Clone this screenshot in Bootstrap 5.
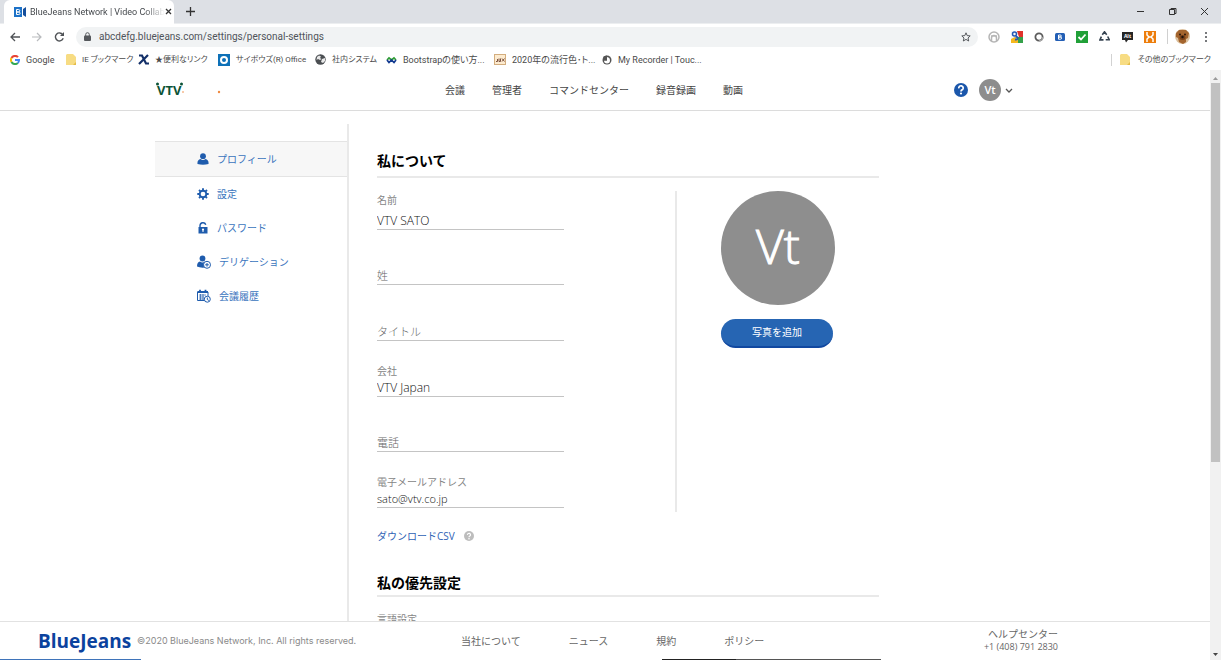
<!DOCTYPE html>
<html lang="ja">
<head>
<meta charset="utf-8">
<meta name="viewport" content="width=device-width, initial-scale=1">
<title>BlueJeans Network | Video Collaboration</title>
<link rel="stylesheet" href="https://cdn.jsdelivr.net/npm/bootstrap@5.3.0/dist/css/bootstrap.min.css">
<style>
  :root { --bj-blue: #1f5cad; --rule: #e4e4e4; --soft-rule: #e9e9e9; }
  body { font-family: "Open Sans", "Noto Sans CJK JP", sans-serif; font-size: 10px; line-height: 16px; color: #444; background: #fff; }
  a { text-decoration: none; color: inherit; }
  svg { display: block; flex: none; }
  button { border: 0; background: none; padding: 0; color: inherit; }

  /* browser frame */
  .tabstrip { height: 24px; background: #dde0e5; border-bottom: 1px solid #eceef0; }
  .page-tab { width: 170px; height: 24px; margin-left: 4px; padding: 0 8px 0 10px; background: #fff; border-radius: 6px 6px 0 0; font: 9px/24px "Roboto", sans-serif; color: #45494d; }
  .tab-title { white-space: nowrap; -webkit-mask-image: linear-gradient(90deg, #000 85%, transparent); mask-image: linear-gradient(90deg, #000 85%, transparent); }
  .window-buttons { gap: 23px; padding-right: 12px; }
  .toolbar { height: 25px; padding: 0 10px; }
  .nav-arrows { width: 66px; gap: 12px; }
  .omnibox { height: 20px; border-radius: 10px; background: #f1f3f4; padding: 0 7px 0 8px; }
  .omnibox input { border: 0; outline: 0; background: none; padding: 0; font: 10px/16px "Roboto", sans-serif; color: #50545a; }
  .extensions { gap: 11px; padding-left: 10px; }
  .extensions .vr { margin-right: -4px; }
  .bookmarks { height: 21px; padding: 0 10px; font: 9px/20px "Roboto", "Noto Sans CJK JP", sans-serif; font-feature-settings: "palt"; color: #4a4a4a; }
  .bookmark-list { display: grid; grid-template-columns: 56px 72px 80px 97px 71px 108px 108px auto; white-space: nowrap; }
  .bookmark-list a { display: flex; align-items: center; gap: 6px; }
  .kana { font-size: 8px; }

  /* site */
  .site-header { height: 41px; border-bottom: 1px solid #dcdcdc; }
  .wrap { width: 100%; max-width: 900px; margin: 0 auto; }
  .brand { width: 290px; }
  .main-menu { gap: 27px; }
  .initials { width: 22px; height: 22px; border-radius: 50%; background: #8d8d8d; color: #fff; font: 600 11px/22px "Open Sans", sans-serif; text-align: center; }
  .account { gap: 11px; margin-right: 42px; }
  .side { width: 194px; margin-top: 13px; padding-top: 17px; border-right: 2px solid var(--soft-rule); }
  .side a { display: flex; align-items: center; height: 34px; padding-left: 42px; gap: 8px; color: #3a74bd; }
  .side a.current { height: 36px; background: #f7f7f7; border-top: 1px solid var(--rule); border-bottom: 1px solid var(--rule); }
  .settings { width: 530px; padding: 38px 0 0 28px; }
  .section-title { font-size: 14px; line-height: 24px; font-weight: 700; color: #000; margin: 0; border-bottom: 2px solid var(--soft-rule); }
  .section-title.roomy { padding-bottom: 3px; }
  .fields { display: grid; grid-auto-rows: 1fr; width: 187px; height: 334px; margin-top: -4px; }
  .field { display: flex; flex-direction: column; justify-content: flex-end; }
  .field label, .muted { color: #858585; line-height: 16px; }
  .field input { border: 0; border-bottom: 1px solid #c4c4c4; border-radius: 0; outline: 0; padding: 0; width: 100%; height: 18px; font: 300 11px/16px "Open Sans", "Noto Sans CJK JP", sans-serif; color: #111; }
  .field input.large-value { font-size: 12px; }
  .field input::placeholder { color: #666; opacity: 1; }
  .photo { margin: 13px 0 0 111px; padding-left: 44px; height: 321px; border-left: 2px solid var(--soft-rule); }
  .big-initials { width: 114px; height: 114px; border-radius: 50%; background: #8e8e8e; color: #fff; font: 300 48px/110px "Open Sans", sans-serif; -webkit-text-stroke: 1px #fff; text-align: center; }
  .add-photo { width: 112px; height: 29px; margin-top: 14px; border-radius: 15px; background: #2665b3; border-bottom: 2px solid #1148a0; color: #fff; line-height: 27px; }
  .csv { margin: 16px 0 27px; gap: 9px; height: 16px; color: #2f62b5; }
  .muted { padding-top: 14px; }
  .site-footer { height: 38px; border-top: 1px solid #e2e2e2; padding: 0 152px 0 38px; color: #666; background: #fff; }
  .logo-text { font: 700 19px/34px "Open Sans", sans-serif; color: #0b429e; width: 99px; }
  .copyright { width: 324px; color: #8a8a8a; font: 9px/36px "Inter", sans-serif; }
  .foot-links { gap: 48px; }
  .help { line-height: 12px; text-align: right; }
  .help small { font-size: 9px; }
  .taskbar-edge { height: 1px; background: linear-gradient(90deg, #3f74ba 0 141px, transparent 141px 662px, #222 662px 736px, #555 736px 881px, transparent 881px); }
  .scroller { width: 11px; background: #f1f1f1; }
  .scroller .thumb { flex: 67; margin: 0 1px; background: #c1c1c1; }
  .scroller .rest { flex: 33; }
</style>
</head>
<body class="vh-100 overflow-hidden d-flex flex-column">

<div class="tabstrip d-flex align-items-center flex-shrink-0">
  <div class="page-tab d-flex align-items-center">
    <svg width="12" height="10" viewBox="0 0 12 10"><rect width="8" height="10" fill="#1d72c8"/><path d="M9 2l3-2v10l-3-2z" fill="#164f9c"/><path d="M2.500 2.500h2a1.200 1.200 0 010 2.500h-2zM2.500 5h2.300a1.200 1.200 0 010 2.500H2.500z" fill="none" stroke="#fff"/></svg>
    <span class="tab-title flex-fill ms-1">BlueJeans Network | Video Collab</span>
    <button aria-label="タブを閉じる"><svg width="7" height="7" viewBox="0 0 7 7" stroke="#333" stroke-width="1.300"><path d="M1 1l5 5M6 1L1 6"/></svg></button>
  </div>
  <button class="ms-2 ps-1" aria-label="新しいタブ"><svg width="9" height="9" viewBox="0 0 9 9" stroke="#333" stroke-width="1.300"><path d="M4.500 0v9M0 4.500h9"/></svg></button>
  <div class="window-buttons d-flex align-items-center ms-auto">
    <button aria-label="最小化"><svg width="9" height="9" viewBox="0 0 9 9" stroke="#333"><path d="M1 4.500h7"/></svg></button>
    <button aria-label="元に戻す"><svg width="9" height="9" viewBox="0 0 9 9" stroke="#333" fill="none"><path d="M1.500 2.500h5v5h-5zM3 2.500v-1h5v5H6.500"/></svg></button>
    <button aria-label="閉じる"><svg width="9" height="9" viewBox="0 0 9 9" stroke="#333"><path d="M1 1l7 7M8 1L1 8"/></svg></button>
  </div>
</div>

<div class="toolbar d-flex align-items-center flex-shrink-0">
  <div class="nav-arrows d-flex align-items-center">
    <button aria-label="戻る"><svg width="10" height="10" viewBox="0 0 10 10" fill="none" stroke="#505357" stroke-width="1.300"><path d="M10 5H1M5 1L1 5l4 4"/></svg></button>
    <button aria-label="進む"><svg width="10" height="10" viewBox="0 0 10 10" fill="none" stroke="#b9bbbe" stroke-width="1.200"><path d="M0 5h9M5 1l4 4-4 4"/></svg></button>
    <button aria-label="再読み込み"><svg width="11" height="10" viewBox="0 0 11 10" fill="none" stroke="#505357" stroke-width="1.400"><path d="M8.700 2.600A4 4 0 109.200 6.300"/><path d="M10 0v4H6z" fill="#505357" stroke="none"/></svg></button>
  </div>
  <div class="omnibox d-flex align-items-center flex-fill">
    <svg width="7" height="9" viewBox="0 0 7 9"><rect y="3.500" width="7" height="5.500" rx="1" fill="#55585c"/><path d="M1.700 4V2.500a1.800 1.800 0 013.600 0V4" fill="none" stroke="#55585c"/></svg>
    <input class="flex-fill ms-2" type="text" aria-label="アドレス" value="abcdefg.bluejeans.com/settings/personal-settings">
    <svg width="10" height="10" viewBox="0 0 10 10" fill="none" stroke="#55585c"><path d="M5 .8l1.200 2.800 3 .3L7 6l.7 3L5 7.400 2.300 9 3 6 .8 3.900l3-.3z"/></svg>
  </div>
  <div class="extensions d-flex align-items-center">
    <svg width="12" height="12" viewBox="0 0 12 12" fill="none" stroke="#b5b5b5" stroke-width="1.500"><circle cx="6" cy="6" r="5"/><path d="M3.500 10V7a2.500 2.500 0 015 0v3M3 5h6"/></svg>
    <svg width="12" height="12" viewBox="0 0 12 12"><path d="M0 0h12v12H0z" fill="#f4f6fa"/><path d="M6 0h6v6H8z" fill="#e0322b"/><path d="M7 6h5v6H7z" fill="#35a14a"/><path d="M0 8l4-2 3 2v4H0z" fill="#f5b81e"/><circle cx="3.500" cy="3" r="2" fill="none" stroke="#2358b5" stroke-width="1.500"/><path d="M4.500 5.500C8 6 7 9 4 8.500" fill="none" stroke="#2358b5" stroke-width="1.800"/></svg>
    <svg width="10" height="10" viewBox="0 0 10 10"><circle cx="5" cy="5" r="3.600" fill="none" stroke="#5c5c5c" stroke-width="1.800"/><path d="M5 9a4 4 0 004-4" fill="none" stroke="#aaa" stroke-width="1.500"/></svg>
    <svg width="10" height="10" viewBox="0 0 10 10"><rect y="1" width="10" height="8" rx="1.500" fill="#235fb5"/><path d="M3.500 3h1.800a1 1 0 010 2H3.500zM3.500 5h2a1 1 0 010 2.200h-2z" fill="none" stroke="#fff"/></svg>
    <svg width="12" height="12" viewBox="0 0 12 12"><rect width="12" height="12" fill="#21a038"/><path d="M2.500 6l2.500 2.500 4.500-5" fill="none" stroke="#fff" stroke-width="1.800"/></svg>
    <svg width="11" height="11" viewBox="0 0 11 11" fill="none" stroke="#344250" stroke-width="1.600"><path d="M3.300 3.800L5.500.8l2.200 3M8.700 5.500l1.500 3.200H6.700M4.500 8.900H.9l1.500-3.300"/></svg>
    <svg width="12" height="12" viewBox="0 0 12 12"><path d="M1 1h11v8H7l-2 2.500L4 9H1z" fill="#252525"/><text x="6.500" y="7" text-anchor="middle" font-family="Open Sans" font-weight="700" font-size="5" fill="#fff">Alt</text></svg>
    <svg width="12" height="12" viewBox="0 0 12 12"><rect width="12" height="12" fill="#ed7d0b"/><path d="M3 1v3l2 2-2 2v3M9 1v3L7 6l2 2v3M5 6h2" fill="none" stroke="#fff" stroke-width="1.500"/></svg>
    <span class="vr"></span>
    <svg width="15" height="15" viewBox="0 0 15 15"><circle cx="7.500" cy="7.500" r="7.500" fill="#dcc09d"/><path d="M1 4l3-3h7l3 3-1 5-2 1v3l-3 2-4-2-1-4-2-1z" fill="#a3642e"/><ellipse cx="7.500" cy="8.500" rx="3" ry="2.500" fill="#784018"/><circle cx="5" cy="5.500" r="1" fill="#2c170b"/><circle cx="10" cy="5.500" r="1" fill="#2c170b"/><circle cx="7.500" cy="8" r="1.200" fill="#1e120b"/></svg>
    <button aria-label="メニュー"><svg width="10" height="12" viewBox="0 0 10 12" fill="#4a4d50"><circle cx="5" cy="2" r="1"/><circle cx="5" cy="6" r="1"/><circle cx="5" cy="10" r="1"/></svg></button>
  </div>
</div>

<div class="bookmarks d-flex align-items-center flex-shrink-0">
  <nav class="bookmark-list" aria-label="ブックマーク">
    <a href="#"><svg width="10" height="10" viewBox="0 0 10 10" fill="none" stroke-width="2"><path d="M8 2.200A4 4 0 001.500 3" stroke="#e84335"/><path d="M1.500 3a4 4 0 000 4" stroke="#f9bc05"/><path d="M1.500 7A4 4 0 007.800 8" stroke="#34a853"/><path d="M7.800 8A4 4 0 009 5H5" stroke="#4285f4"/></svg><span>Google</span></a>
    <a href="#"><svg width="10" height="11" viewBox="0 0 10 11"><path d="M1 0h6l3 3v8H0V1z" fill="#f7dc83"/><path d="M7 11l3-3v3z" fill="#e5bc48"/></svg><span class="kana">IE ブックマーク</span></a>
    <a href="#"><svg width="11" height="11" viewBox="0 0 11 11" stroke="#132f68" stroke-width="2.200"><path d="M1 1.500h3l4 8h3M10 1L1 10" fill="none"/></svg><span class="kana">★便利なリンク</span></a>
    <a href="#"><svg width="12" height="12" viewBox="0 0 12 12"><rect width="12" height="12" fill="#0e71b8"/><circle cx="6" cy="6" r="3" fill="none" stroke="#fff" stroke-width="2"/></svg><span class="kana">サイボウズ(R) Office</span></a>
    <a href="#"><svg width="11" height="11" viewBox="0 0 11 11"><circle cx="5.500" cy="5.500" r="5.200" fill="#4b4e52"/><path d="M2 3l2-1.500 2 1L5 4l1.500 1L5 6 3 5 1.500 6zM7 5l3-1v3L8 9 6 8z" fill="#e8e8e8"/></svg><span class="kana">社内システム</span></a>
    <a href="#"><svg width="11" height="8" viewBox="0 0 11 8" fill="none" stroke-width="1.700"><path d="M1 4l2-2 2.500 2L8 2l2 2" stroke="#2f9d35"/><path d="M1 4l2 2.500L5.500 4 8 6.500 10 4" stroke="#123a90"/></svg><span>Bootstrapの使い方...</span></a>
    <a href="#"><svg width="12" height="11" viewBox="0 0 12 11"><rect x=".5" y=".5" width="11" height="10" fill="#fdebcf" stroke="#d3ad7e"/><path d="M2 7.500h1.500V5M5 4.500v3h1.500v-3M8 4.500l2.500 3M10.500 4.500L8 7.500" fill="none" stroke="#7c5240"/></svg><span>2020年の流行色･ト...</span></a>
    <a href="#"><svg width="10" height="10" viewBox="0 0 10 10"><circle cx="5" cy="5" r="4.500" fill="#555"/><path d="M5 2v3.500H2A3 3 0 108 5.500 3.500 3.500 0 005 2z" fill="#fff"/><path d="M1.500 1.500L5 .5v5H1z" fill="#555"/></svg><span>My Recorder | Touc...</span></a>
  </nav>
  <a class="d-flex align-items-center ms-auto gap-2" href="#"><span class="vr my-1"></span><svg width="10" height="11" viewBox="0 0 10 11"><path d="M1 0h6l3 3v8H0V1z" fill="#f7dc83"/><path d="M7 11l3-3v3z" fill="#e5bc48"/></svg><span class="kana text-nowrap">その他のブックマーク</span></a>
</div>

<div class="d-flex flex-fill overflow-hidden">
  <div class="d-flex flex-column flex-fill overflow-hidden">
    <header class="site-header d-flex align-items-center flex-shrink-0">
      <div class="wrap d-flex align-items-center">
        <a class="brand" href="#" aria-label="VTV">
          <svg width="68" height="20" viewBox="0 0 68 20"><text x="2" y="15" font-family="Open Sans" font-weight="700" font-size="13" fill="#0c5336">VTV</text><circle cx="2.500" cy="4" r="1.500" fill="#0c5336"/><circle cx="26.500" cy="4" r="1.500" fill="#0c5336"/><circle cx="28" cy="12" r="1" fill="#f5b98e"/><circle cx="64" cy="12" r="1.200" fill="#ef8b42"/></svg>
        </a>
        <nav class="main-menu d-flex text-nowrap"><a href="#">会議</a><a href="#">管理者</a><a href="#">コマンドセンター</a><a href="#">録音録画</a><a href="#">動画</a></nav>
        <div class="account d-flex align-items-center ms-auto">
          <button aria-label="ヘルプ"><svg width="14" height="14" viewBox="0 0 14 14"><circle cx="7" cy="7" r="7" fill="#1b57ab"/><path d="M4.800 5.300a2.200 2.200 0 114 .9C8.200 7 7 7 7 8.500" fill="none" stroke="#fff" stroke-width="1.700"/><circle cx="7" cy="10.500" r="1.100" fill="#fff"/></svg></button>
          <button class="d-flex align-items-center" aria-label="アカウント"><span class="initials me-1">Vt</span><svg width="8" height="5" viewBox="0 0 8 5" fill="none" stroke="#555" stroke-width="1.300"><path d="M1 1l3 3 3-3"/></svg></button>
        </div>
      </div>
    </header>

    <main class="flex-fill overflow-hidden">
      <div class="wrap d-flex h-100">
        <nav class="side flex-shrink-0" aria-label="設定メニュー">
          <a class="current" href="#"><svg width="12" height="12" viewBox="0 0 12 12" fill="#1f5cad"><circle cx="6" cy="3.200" r="2.900"/><path d="M3.500 6Q6 8 8.500 6 12 7 11.500 11 6 12.500 .5 11 0 7 3.500 6z"/></svg>プロフィール</a>
          <a href="#"><svg width="12" height="12" viewBox="0 0 12 12" fill="none" stroke="#1f5cad"><circle cx="6" cy="6" r="3.300" stroke-width="1.900"/><path d="M6 .3v2M6 9.700v2M.3 6h2M9.700 6h2M2 2l1.400 1.400M8.600 8.600L10 10M10 2L8.600 3.400M3.400 8.600L2 10" stroke-width="1.900"/></svg>設定</a>
          <a href="#"><svg width="12" height="12" viewBox="0 0 12 12"><path d="M3 6V3.500a3 3 0 015.800-.8" fill="none" stroke="#1f5cad" stroke-width="1.400"/><path d="M1.500 5h9v6.500h-9z" fill="#1f5cad"/><circle cx="6" cy="7.500" r="1.100" fill="#fff"/><path d="M5.500 8h1v2h-1z" fill="#fff"/></svg>パスワード</a>
          <a href="#"><svg width="14" height="14" viewBox="0 0 14 14"><g fill="#1f5cad"><circle cx="5.500" cy="3.500" r="2.900"/><path d="M3 6.500q2.500 2 5 0l2 1.500-2 4.500Q3 13 0 11.500 0 7 3 6.500z"/></g><circle cx="10" cy="9.800" r="3.500" fill="#fff" stroke="#1f5cad"/><path d="M10 8v3.600M8.200 9.800h3.600" stroke="#1f5cad"/></svg>デリゲーション</a>
          <a href="#"><svg width="14" height="14" viewBox="0 0 14 14" fill="none" stroke="#1f5cad"><path d="M.5 3v8.500h8M.5 3h10.500v4"/><path d="M.5 3h10.500M3 .8v2.500M8.500 .8v2.500" stroke-width="1.800"/><path d="M2 6h7M2 8h5M2 10h5M3.500 5v6M6 5v6" stroke-width=".7"/><circle cx="10.300" cy="10.200" r="3" fill="#fff"/><path d="M10.300 8.500v2l1.500 1"/></svg>会議履歴</a>
        </nav>

        <div class="settings flex-shrink-0">
          <h2 class="section-title roomy">私について</h2>
          <div class="d-flex">
            <form class="fields">
              <div class="field"><label class="mb-1" for="f-name">名前</label><input class="large-value" id="f-name" type="text" value="VTV SATO"></div>
              <div class="field"><input id="f-last" type="text" placeholder="姓" aria-label="姓"></div>
              <div class="field"><input id="f-title" type="text" placeholder="タイトル" aria-label="タイトル"></div>
              <div class="field"><label for="f-company">会社</label><input class="large-value" id="f-company" type="text" value="VTV Japan"></div>
              <div class="field"><input id="f-tel" type="tel" placeholder="電話" aria-label="電話"></div>
              <div class="field"><label for="f-mail">電子メールアドレス</label><input id="f-mail" type="email" value="sato@vtv.co.jp"></div>
            </form>
            <div class="photo">
              <div class="big-initials">Vt</div>
              <button class="add-photo" type="button">写真を追加</button>
            </div>
          </div>
          <div class="csv d-flex align-items-center"><a href="#">ダウンロードCSV</a><svg width="10" height="10" viewBox="0 0 10 10"><circle cx="5" cy="5" r="5" fill="#bdbdbd"/><path d="M3.500 3.900a1.500 1.500 0 112.700.8C5.700 5.200 5 5.200 5 6.200" fill="none" stroke="#fff" stroke-width="1.200"/><circle cx="5" cy="7.700" r=".8" fill="#fff"/></svg></div>
          <h2 class="section-title">私の優先設定</h2>
          <div class="muted">言語設定</div>
        </div>
      </div>
    </main>

    <footer class="site-footer d-flex align-items-center flex-shrink-0 text-nowrap">
      <span class="logo-text">BlueJeans</span>
      <span class="copyright">©2020 BlueJeans Network, Inc. All rights reserved.</span>
      <nav class="foot-links d-flex"><a href="#">当社について</a><a href="#">ニュース</a><a href="#">規約</a><a href="#">ポリシー</a></nav>
      <div class="help ms-auto"><a href="#">ヘルプセンター</a><br><small>+1 (408) 791 2830</small></div>
    </footer>
    <div class="taskbar-edge flex-shrink-0"></div>
  </div>
  <div class="scroller d-flex flex-column flex-shrink-0" aria-hidden="true">
    <svg width="11" height="13" viewBox="0 0 11 13"><path d="M3 10l2.500-3L8 10z" fill="#999"/></svg>
    <div class="thumb"></div><div class="rest"></div>
    <svg width="11" height="12" viewBox="0 0 11 12"><path d="M3 5l2.500 3L8 5z" fill="#444"/></svg>
  </div>
</div>
<script src="https://cdn.jsdelivr.net/npm/bootstrap@5.3.0/dist/js/bootstrap.bundle.min.js"></script>
</body>
</html>
